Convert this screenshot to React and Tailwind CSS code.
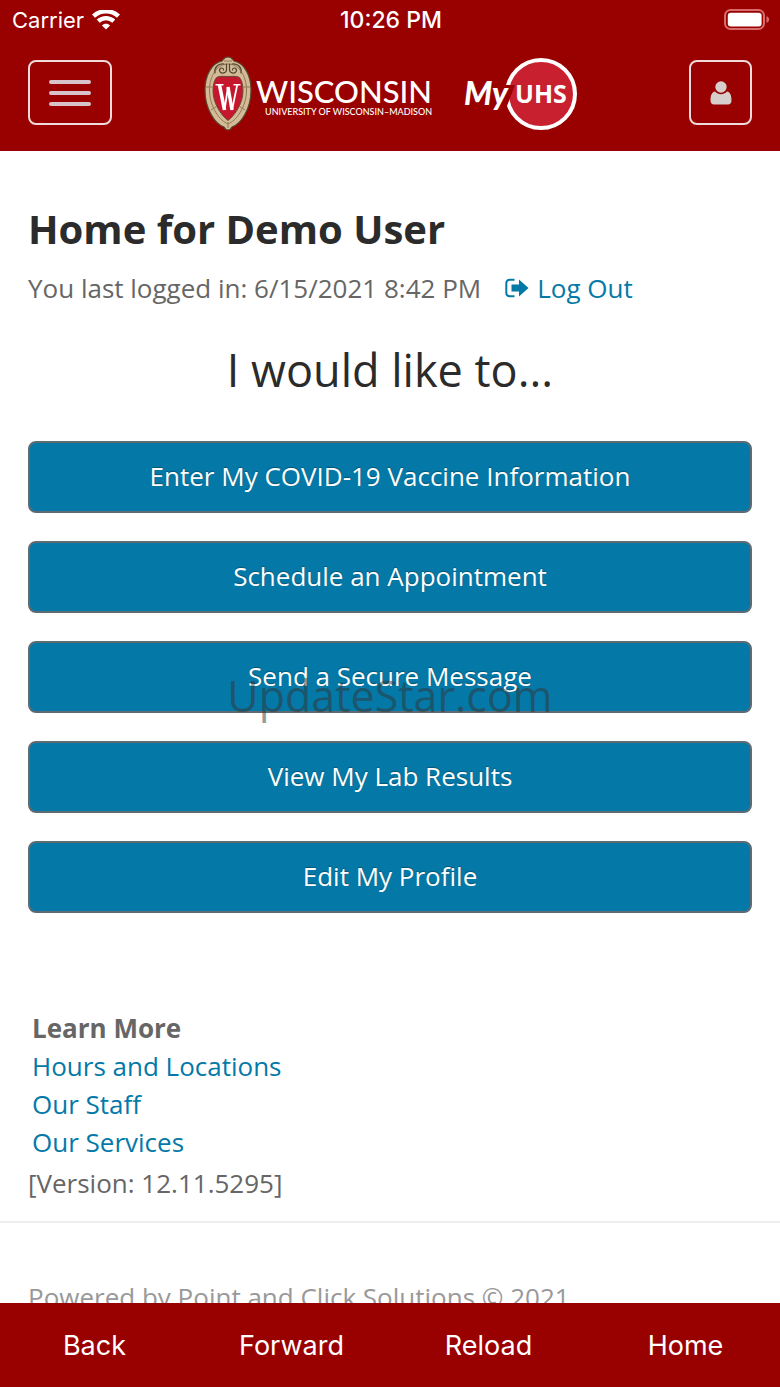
const ACTIONS = [
  "Enter My COVID-19 Vaccine Information",
  "Schedule an Appointment",
  "Send a Secure Message",
  "View My Lab Results",
  "Edit My Profile",
];

const LEARN_MORE = ["Hours and Locations", "Our Staff", "Our Services"];

const NAV_ITEMS = ["Back", "Forward", "Reload", "Home"];

const WifiIcon = () => (
  <svg className="w-7 h-5" viewBox="0 0 28 20" fill="none" stroke="white" strokeWidth="4.4" aria-hidden="true">
    <path d="M1.5 6.2C8.5 -0.4 19.5 -0.4 26.5 6.2" />
    <path d="M6.2 11.2C10.8 7.1 17.2 7.1 21.8 11.2" />
    <path d="M14 19.500L9.9 15.400C12.2 13.300 15.8 13.300 18.1 15.400Z" fill="white" stroke="none" />
  </svg>
);

const BatteryIcon = () => (
  <svg className="w-[46px] h-[22px]" viewBox="0 0 46 22" aria-hidden="true">
    <rect x="1" y="1" width="39" height="19" rx="5.5" fill="none" stroke="#d96b6b" strokeWidth="2" />
    <rect x="3.8" y="3.8" width="33.8" height="13.6" rx="3" fill="white" />
    <path d="M42.5 7C46 8.5 46 12.5 42.5 14Z" fill="#d96b6b" />
  </svg>
);

const StatusBar = () => (
  <div className="grid grid-cols-[1fr_auto_1fr] items-center h-10 pl-3 pr-2.5 font-['Inter',sans-serif] text-[22px] leading-6 text-white">
    <div className="flex items-center gap-2">
      <span>Carrier</span>
      <WifiIcon />
    </div>
    <span className="text-center text-[23px] font-medium">10:26 PM</span>
    <div className="flex justify-end">
      <BatteryIcon />
    </div>
  </div>
);

const Crest = () => (
  <svg className="w-12 h-[76px]" viewBox="0 0 48 76" aria-hidden="true">
    <path
      d="M24 1C28 1 29 4 30 5C40 7 47 19 47 34C47 53 37 68 28 71C26 75 22 75 20 71C11 68 1 53 1 34C1 19 8 7 18 5C19 4 20 1 24 1Z"
      fill="#d3bb98"
      stroke="#5b4630"
      strokeWidth="1.2"
    />
    <path
      d="M24 8C35 8 42.5 20 42.5 34C42.5 51 32 65 24 68C16 65 5.5 51 5.5 34C5.5 20 13 8 24 8Z"
      fill="none"
      stroke="#8f7858"
      strokeWidth="1"
    />
    <path
      d="M12.5 21.5C16 19.5 20 20.5 24 20.5C28 20.5 32 19.5 35.5 21.5C39 26 39.5 33 38.5 40C37 50 30 60 24 64.5C18 60 11 50 9.5 40C8.5 33 9 26 12.5 21.5Z"
      fill="#c5162e"
      stroke="#6b4a35"
      strokeWidth="1"
    />
    <g fill="none" stroke="#4f4431" strokeWidth="1.2" strokeLinecap="round">
      <path d="M22.5 8V14C22 18 16 18 15.5 14.5C15.5 11.500 19.5 11 19.500 14" />
      <path d="M25.5 8V14C26 18 32 18 32.5 14.5C32.5 11.500 28.5 11 28.500 14" />
      <path d="M20 8C14 7 10 12 11 17" />
      <path d="M28 8C34 7 38 12 37 17" />
    </g>
    <g stroke="#8f7858" strokeWidth="1">
      <path d="M2 31H8.5M39.5 31H46M7 54L13 50M41 54L35 50M20 5H28M24 66V72" />
    </g>
    <g fill="none" stroke="white" strokeLinejoin="miter" strokeMiterlimit="8">
      <path d="M15.5 29L20.5 54" strokeWidth="3.6" />
      <path d="M20.5 54L24 31" strokeWidth="1.8" />
      <path d="M24 31L28 54" strokeWidth="3.4" />
      <path d="M28 54L33.200 29" strokeWidth="1.8" />
      <path d="M11.500 28.800H19.500M29.500 28.800H36.500" strokeWidth="1.6" />
    </g>
  </svg>
);

const WisconsinLogo = () => (
  <div className="flex items-center gap-1 text-white font-['Lato',sans-serif]">
    <Crest />
    <div className="flex flex-col items-end pt-2">
      <span className="text-[31px] leading-7 font-medium">WISCONSIN</span>
      <span className="text-[9px] leading-[14px] font-medium whitespace-nowrap">UNIVERSITY OF WISCONSIN–MADISON</span>
    </div>
  </div>
);

const MyUhsLogo = () => (
  <svg className="w-[114px] h-[74px]" viewBox="0 0 114 74" role="img" aria-label="MyUHS">
    <circle cx="77" cy="37" r="34" fill="#c8202f" stroke="white" strokeWidth="4" />
    <path d="M38 28H51L43 49H37Z" fill="#990000" />
    <g fill="white" fontFamily="'Lato', sans-serif">
      <text x="0" y="48" fontSize="32" fontWeight="900" fontStyle="italic">My</text>
      <text x="51" y="46" fontSize="25" fontWeight="700" fontFamily="'Open Sans', sans-serif">UHS</text>
    </g>
  </svg>
);

const UserIcon = () => (
  <svg className="w-[22px] h-6" viewBox="0 0 22 24" fill="#d6cfcb" aria-hidden="true">
    <circle cx="11" cy="6" r="5.7" />
    <path d="M5 10.5C8.5 14 13.5 14 17 10.5C20.5 11 21.5 15 21.5 19.5C21.5 22 20 23.5 18 23.5H4C2 23.5 0.5 22 0.5 19.5C0.5 15 1.5 11 5 10.5Z" />
  </svg>
);

const LogOutIcon = () => (
  <svg className="w-6 h-5" viewBox="0 0 24 20" aria-hidden="true">
    <path d="M9.5 1.8H5C2.8 1.8 1.3 3.3 1.3 5.5V14.5C1.3 16.7 2.8 18.2 5 18.2H9.5" fill="none" stroke="currentColor" strokeWidth="2" />
    <path d="M6.5 6.5H14V1.5L23.5 10L14 18.5V13.5H6.5Z" fill="currentColor" />
  </svg>
);

const Header = () => (
  <header className="shrink-0 bg-[#990000]">
    <StatusBar />
    <div className="grid grid-cols-[1fr_auto_1fr] items-center h-[111px] px-7 pb-1.5">
      <button
        type="button"
        aria-label="Menu"
        className="flex flex-col items-center justify-center gap-[7px] w-[84px] h-[65px] rounded-lg border-2 border-[#f0dada]"
      >
        <span className="w-[42px] h-1 rounded-full bg-[#d9c3cb]" />
        <span className="w-[42px] h-1 rounded-full bg-[#d9c3cb]" />
        <span className="w-[42px] h-1 rounded-full bg-[#d9c3cb]" />
      </button>
      <div className="flex items-center gap-8 pt-0.5 pl-0.5">
        <WisconsinLogo />
        <MyUhsLogo />
      </div>
      <button
        type="button"
        aria-label="Account"
        className="flex items-center justify-center justify-self-end w-[63px] h-[65px] rounded-lg border-2 border-[#f0dada]"
      >
        <UserIcon />
      </button>
    </div>
  </header>
);

export default function App() {
  return (
    <div className="relative flex flex-col h-screen overflow-hidden bg-white font-['Open_Sans',sans-serif] text-[26px] text-[#666666]">
      <Header />

      <main className="flex-1 min-h-0 overflow-hidden">
        <div className="px-7 pt-12">
          <h1 className="text-[40px] leading-[60px] font-bold text-[#2b2b2b]">Home for Demo User</h1>
          <p className="flex items-center gap-6 mt-[11px] leading-9">
            <span>You last logged in: 6/15/2021 8:42 PM</span>
            <a href="#logout" className="flex items-center gap-2 text-[#0479a8]">
              <LogOutIcon />
              Log Out
            </a>
          </p>
          <h2 className="mt-8 text-center text-[45px] leading-[64px] text-[#2b2b2b]">I would like to...</h2>

          <div className="flex flex-col gap-7 mt-[39px]">
            {ACTIONS.map((label) => (
              <button
                key={label}
                type="button"
                className="h-[72px] pb-0.5 rounded-lg border-2 border-[#5f6b72] bg-[#0479a8] text-white text-shadow-[0_-1px_1px_rgb(0_0_0/0.3)]"
              >
                {label}
              </button>
            ))}
          </div>

          <section className="mt-24 pl-1 leading-[38px]">
            <h3 className="font-bold">Learn More</h3>
            <ul>
              {LEARN_MORE.map((label) => (
                <li key={label}>
                  <a href="#learn-more" className="text-[#0479a8]">{label}</a>
                </li>
              ))}
            </ul>
          </section>
          <p className="mt-1 leading-9">[Version: 12.11.5295]</p>
        </div>

        <footer className="mt-5 px-7 pt-14 border-t-2 border-[#eeeeee] leading-9 text-[#999999]">
          Powered by Point and Click Solutions © 2021
        </footer>
      </main>

      <nav className="shrink-0 bg-[#990000] font-['Inter',sans-serif] text-[27px] text-white">
        <div className="grid grid-cols-4 h-[84px] pt-0.5 -mx-1">
          {NAV_ITEMS.map((label) => (
            <button key={label} type="button">{label}</button>
          ))}
        </div>
      </nav>

      {/* Watermark over the middle of the screen */}
      <div className="absolute inset-0 flex items-center justify-center pt-1 pointer-events-none text-[43px] leading-[60px] text-[#333333]/50">
        UpdateStar.com
      </div>
    </div>
  );
}
